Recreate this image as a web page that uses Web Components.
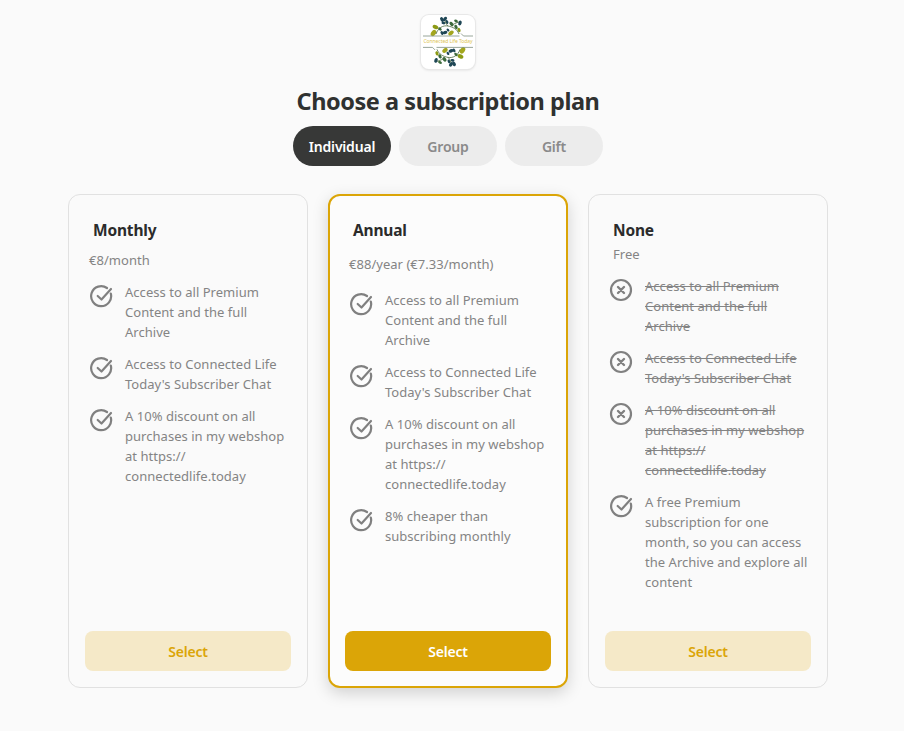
<!DOCTYPE html>
<html lang="en"><head><meta charset="utf-8"><title>Choose a subscription plan</title>
<style>
html,body{margin:0;padding:0;background:#fafafa}
body{font-family:"Noto Sans","Open Sans",sans-serif;font-size:14px}
</style></head><body>
<plan-page>
  <site-logo slot="logo"></site-logo>
  <plan-tab active>Individual</plan-tab><plan-tab>Group</plan-tab><plan-tab>Gift</plan-tab>
  <plan-card slot="cards" name="Monthly" price="€8/month" title-pad="8" price-pad="4" list-pad="5" name-gap="20" price-gap="16">
    <plan-item>Access to all Premium Content and the full Archive</plan-item>
    <plan-item>Access to Connected Life Today's Subscriber Chat</plan-item>
    <plan-item>A 10% discount on all purchases in my webshop at https://<br>connectedlife.today</plan-item>
  </plan-card>
  <plan-card slot="cards" featured name="Annual" price="€88/year (€7.33/month)" title-pad="8" price-pad="4" list-pad="5" name-gap="24" price-gap="20">
    <plan-item>Access to all Premium Content and the full Archive</plan-item>
    <plan-item>Access to Connected Life Today's Subscriber Chat</plan-item>
    <plan-item>A 10% discount on all purchases in my webshop at https://<br>connectedlife.today</plan-item>
    <plan-item>8% cheaper than subscribing monthly</plan-item>
  </plan-card>
  <plan-card slot="cards" name="None" price="Free" title-pad="8" price-pad="8" list-pad="5" name-gap="14" price-gap="16">
    <plan-item off>Access to all Premium Content and the full Archive</plan-item>
    <plan-item off>Access to Connected Life Today's Subscriber Chat</plan-item>
    <plan-item off>A 10% discount on all purchases in my webshop at https://<br>connectedlife.today</plan-item>
    <plan-item>A free Premium subscription for one month, so you can access the Archive and explore all content</plan-item>
  </plan-card>
</plan-page>
<script>
function def(name, css, html){
  customElements.define(name, class extends HTMLElement{
    constructor(){super();this.attachShadow({mode:"open"});}
    connectedCallback(){
      this.shadowRoot.innerHTML="<style>"+css+"</style>"+(typeof html==="function"?html(this):html);
    }
  });
}
def("plan-page",`
:host{display:flex;flex-direction:column;align-items:center;width:896px;padding:15px 0 43px;color:#333}
h1{margin:15px 0 0;font-size:23.500px;line-height:35px;font-weight:700;color:#2f3130;letter-spacing:-.45px}
.tabs{display:flex;gap:8px;margin-top:7px}
.cards{display:grid;grid-template-columns:repeat(3,240px);gap:20px;margin-top:28px;height:494px}
`,`<slot name="logo"></slot><h1>Choose a subscription plan</h1>
<div class="tabs"><slot></slot></div><div class="cards"><slot name="cards"></slot></div>`);

def("site-logo",`
:host{display:block;width:54px;height:54px;border-radius:8px;background:#fff;box-shadow:0 0 0 1px #e8e8e8,0 1px 3px rgba(0,0,0,.14);overflow:hidden;position:relative}
svg{display:block;filter:blur(.25px)}
span{position:absolute;left:0;right:0;top:23px;text-align:center;font:5px/7px "Noto Sans",sans-serif;color:#dcc354;white-space:nowrap;letter-spacing:-.06px}
`,()=>{
 const leaf=(x,y,r,c,l=5)=>`<ellipse cx="${x}" cy="${y}" rx="${l/2}" ry="${l/3}" fill="${c}" transform="rotate(${r} ${x} ${y})"/>`;
 const g="#8c9a14",o="#a3a61e",d="#1f4756",m="#3c6b3c";
 const half=leaf(12.5,18,-55,o,7)+leaf(14.500,12,25,g,6)+leaf(19,14,40,m,4)
  +leaf(21,4.500,60,d,5)+leaf(24,4,-50,d,5)+leaf(22.500,8,10,d,4)+leaf(26,7,70,d,4)
  +leaf(24,17.500,-20,d,5)+leaf(21,18,60,d,4)+leaf(27,15,50,d,3.500)
  +leaf(30,18,-40,o,6)+leaf(30.500,9,50,m,5)+leaf(35,12,60,m,4.500)+leaf(39,8,-70,d,5)+leaf(35,6,30,m,4)+leaf(38,15,70,g,4.500);
 const stems=`<path d="M15 19C17 13 22 10 27 11 32 12 36 14 38 19M24 6C25 9 26 10 27 11M30 11C32 9 35 8 38 7" stroke="#4d6b3f" stroke-width=".8"/>`;
 const one=`<g>${half}${stems}<path d="M2 21H38.500M40 18.500L42.500 21H52" stroke="#7e8f80" stroke-width=".8"/></g>`;
 return `<svg width="54" height="54" viewBox="0 0 54 54" fill="none">${one}<g transform="rotate(180 27 26.700)">${one}</g></svg><span>Connected Life Today</span>`;
});

def("plan-tab",`
:host{display:flex;align-items:center;justify-content:center;width:98px;height:40px;border-radius:20px;background:#ececec;color:#8a8a8a;font-size:14px;font-weight:600;letter-spacing:-.2px}
:host([active]){background:#373837;color:#fff}
`,`<slot></slot>`);

def("plan-card",`
:host{display:flex;flex-direction:column;box-sizing:border-box;height:494px;border:1px solid #e1e1e1;border-radius:12px;padding:16px;background:#fafafa}
:host([featured]){border:2px solid #dba507;padding:15px;background:#fcfcfc;box-shadow:0 5px 16px rgba(0,0,0,.17)}
h2{margin:0;font-size:15.500px;line-height:22px;font-weight:700;color:#2b2b2b;letter-spacing:-.18px;padding-top:8px}
p{margin:0;font-size:13px;line-height:20px;color:#848484;letter-spacing:.03px}
ul{margin:0;padding:0;display:flex;flex-direction:column;gap:12px}
button{margin-top:auto;height:40px;border:0;border-radius:8px;background:#f5e9c8;color:#dba507;font:600 14px "Noto Sans",sans-serif;letter-spacing:-.2px;display:block;width:100%}
:host([featured]) button{background:#dba507;color:#fff}
`,h=>{const a=n=>h.getAttribute(n);
 return `<h2 style="padding-left:${a("title-pad")}px">${a("name")}</h2>
 <p style="padding-left:${a("price-pad")}px;margin-top:${a("name-gap")-11}px">${a("price")}</p>
 <ul style="padding-left:${a("list-pad")}px;margin-top:${a("price-gap")-4}px"><slot></slot></ul>
 <button>Select</button>`});

const check=`<svg width="24" height="24" viewBox="0 0 24 24" fill="none" stroke="#808080" stroke-width="2.200" stroke-linecap="round" stroke-linejoin="round"><path d="M21.800 9.500A10 10 0 1 1 18 4"/><path d="M8.700 12l3.800 3.500L22 5"/></svg>`;
const cross=`<svg width="24" height="24" viewBox="0 0 24 24" fill="none" stroke="#808080" stroke-linecap="round"><circle cx="12" cy="12" r="10" stroke-width="2.200"/><path d="M9 9l6 6M15 9l-6 6" stroke-width="2.400"/></svg>`;
def("plan-item",`
:host{display:grid;grid-template-columns:24px 1fr;column-gap:11px;font-size:13px;line-height:20px;color:#848484;letter-spacing:.03px}
svg{display:block;margin-top:2px;margin-left:-1px}
div{min-width:0}
:host([off]) div{text-decoration:line-through}
`,h=>`${h.hasAttribute("off")?cross:check}<div><slot></slot></div>`);
</script>
</body></html>
